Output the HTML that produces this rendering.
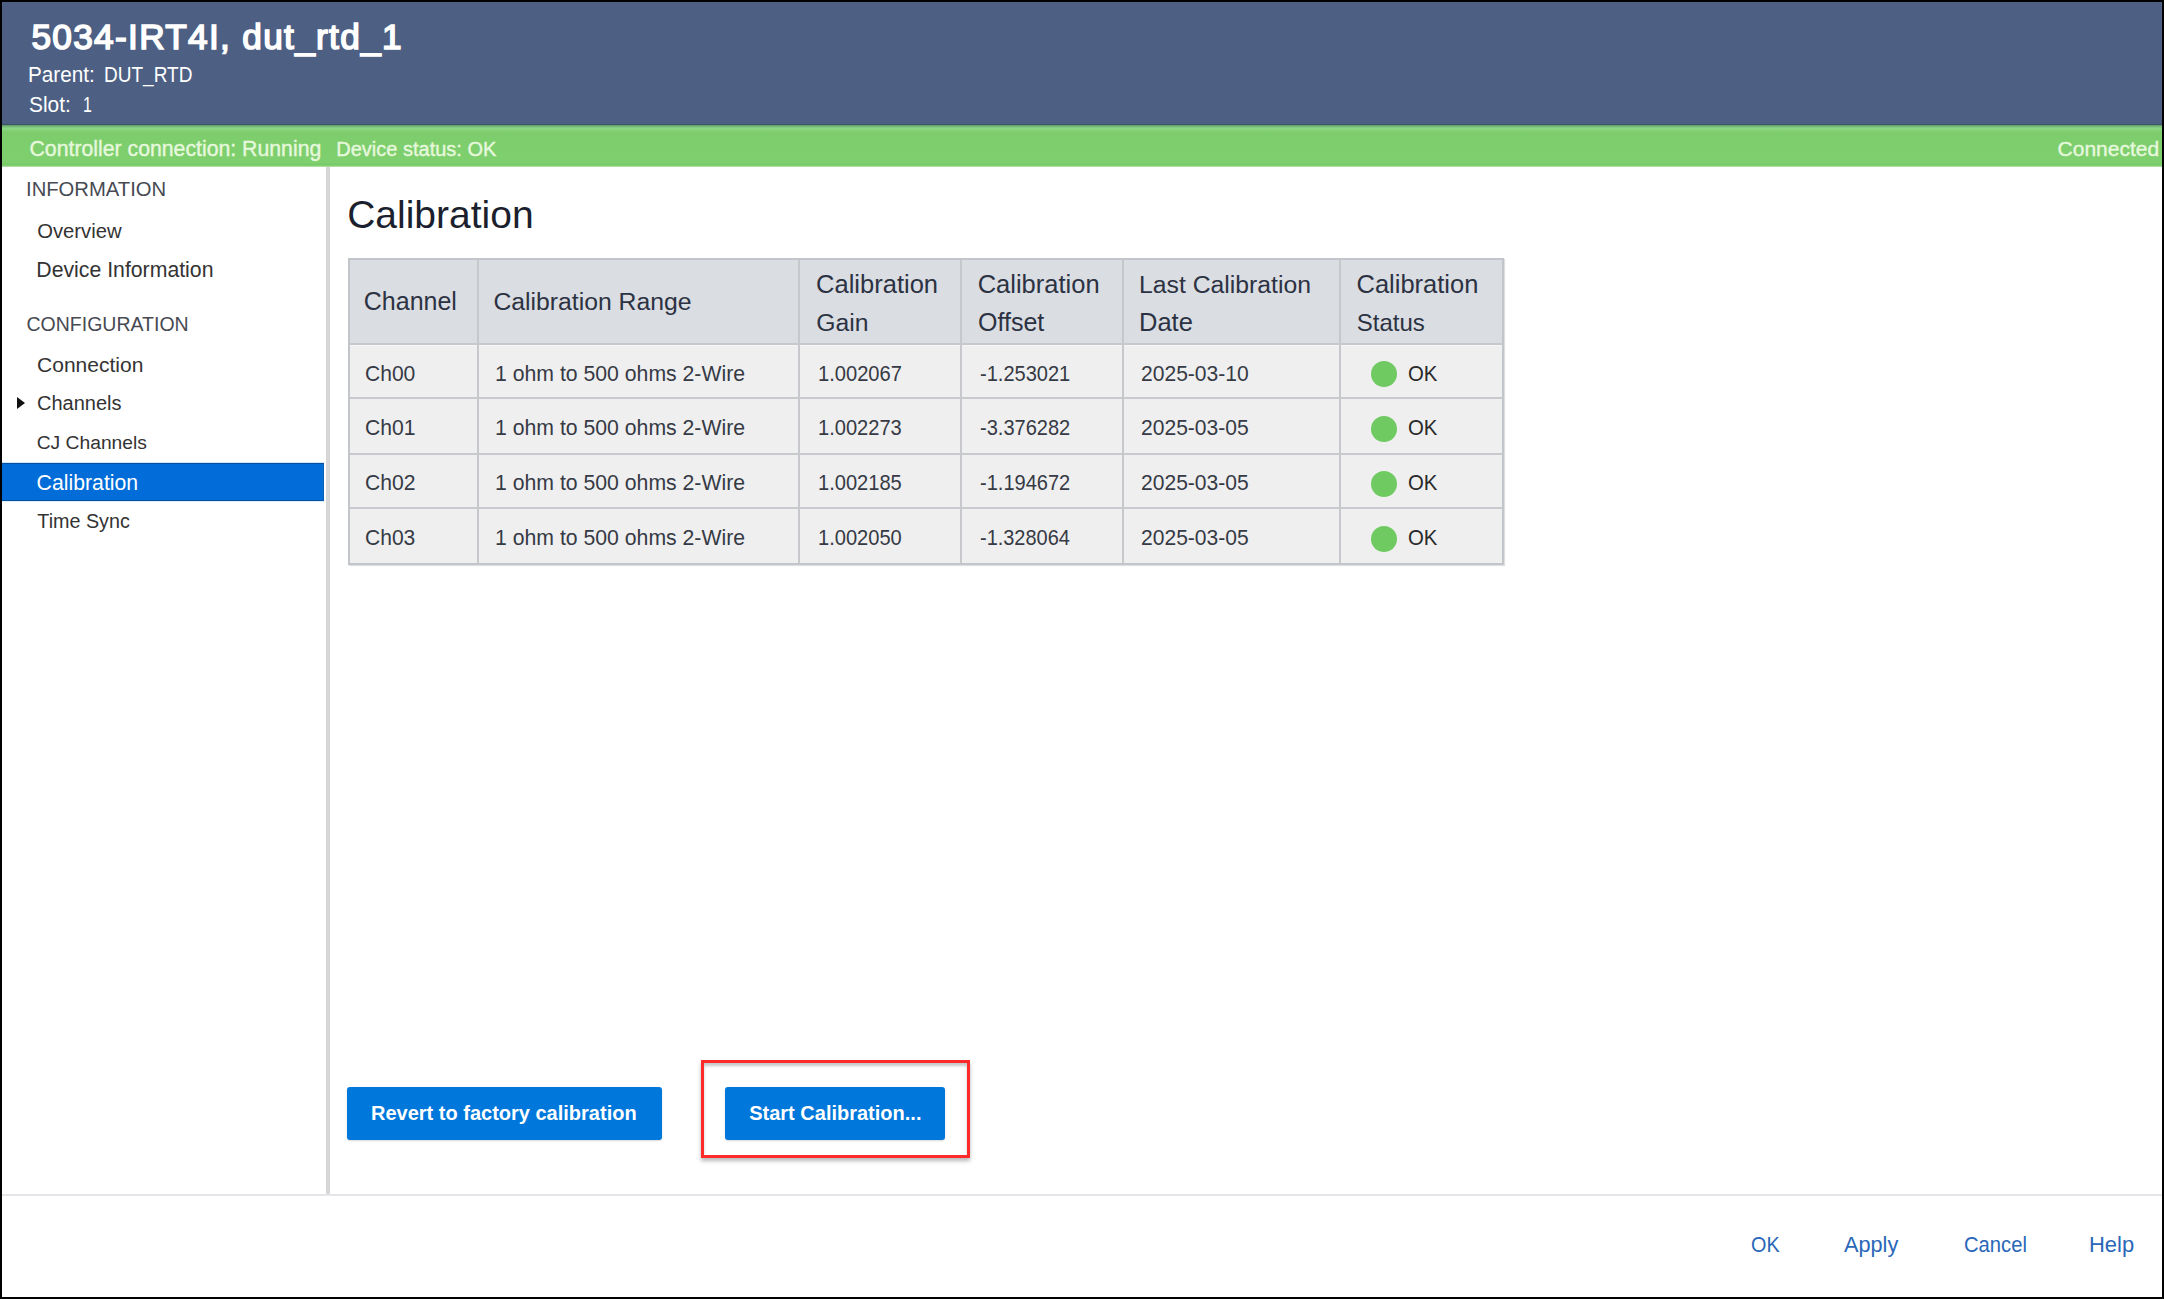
<!DOCTYPE html>
<html><head><meta charset="utf-8">
<style>
html,body{margin:0;padding:0;}
body{width:2164px;height:1299px;background:#000;position:relative;overflow:hidden;font-family:"Liberation Sans",sans-serif;}
.a{position:absolute;}
.t{position:absolute;white-space:pre;font-family:"Liberation Sans",sans-serif;}
</style></head><body>
<div class="a" style="left:2px;top:2px;width:2160px;height:1295px;background:#fff"></div>
<!-- header -->
<div class="a" style="left:2px;top:2px;width:2160px;height:122px;background:#4d5f83"></div>
<div class="a" style="left:2px;top:124px;width:2160px;height:1px;background:#3a5263"></div>
<!-- green bar -->
<div class="a" style="left:2px;top:125px;width:2160px;height:42px;background:linear-gradient(#5f9a6a 0px,#8ad582 3px,#8bd683 4px,#7dcd6d 7px,#7ecf6e 38px,#74c864 40px,#b8e6b0 42px)"></div>
<!-- sidebar -->
<div class="a" style="left:2px;top:463px;width:322px;height:38px;background:#026dd9;box-sizing:border-box;border-top:1px solid #0a4f9e;border-bottom:1px solid #0a4f9e;border-right:1px solid #0d5fb5;box-shadow:0 -1px 0 #cde9ff, 0 1px 0 #d9f0ff"></div>
<svg class="a" style="left:16px;top:396px" width="10" height="14" viewBox="0 0 10 14"><path d="M1 1 L9 7 L1 13 Z" fill="#111"/></svg>
<div class="a" style="left:326px;top:167px;width:4px;height:1027px;background:#d7d6d9"></div>
<!-- bottom divider -->
<div class="a" style="left:2px;top:1194px;width:2160px;height:2px;background:#e6e6ea"></div>
<!-- table -->
<div class="a" style="left:348px;top:258px;width:1156px;height:307px;background:#efeff0;box-sizing:border-box;border:2px solid #c2c5c9;box-shadow:1px 1px 1px rgba(0,0,0,0.12)"></div>
<div class="a" style="left:350px;top:260px;width:1152px;height:83px;background:#dadde2"></div>
<div class="a" style="left:350px;top:343px;width:1152px;height:2px;background:#c6c8cb"></div>
<div class="a" style="left:350px;top:345px;width:1152px;height:1px;background:#f6f6f8"></div>
<div class="a" style="left:350px;top:397px;width:1152px;height:2px;background:#c9cacd"></div>
<div class="a" style="left:350px;top:453px;width:1152px;height:2px;background:#c9cacd"></div>
<div class="a" style="left:350px;top:507px;width:1152px;height:2px;background:#c9cacd"></div>
<div class="a" style="left:477px;top:260px;width:2px;height:303px;background:#c6c8cb"></div>
<div class="a" style="left:798px;top:260px;width:2px;height:303px;background:#c6c8cb"></div>
<div class="a" style="left:960px;top:260px;width:2px;height:303px;background:#c6c8cb"></div>
<div class="a" style="left:1122px;top:260px;width:2px;height:303px;background:#c6c8cb"></div>
<div class="a" style="left:1339px;top:260px;width:2px;height:303px;background:#c6c8cb"></div>
<!-- dots -->
<div class="a" style="left:1371px;top:361px;width:26px;height:26px;border-radius:50%;background:#6fca62"></div>
<div class="a" style="left:1371px;top:416px;width:26px;height:26px;border-radius:50%;background:#6fca62"></div>
<div class="a" style="left:1371px;top:471px;width:26px;height:26px;border-radius:50%;background:#6fca62"></div>
<div class="a" style="left:1371px;top:526px;width:26px;height:26px;border-radius:50%;background:#6fca62"></div>
<!-- buttons -->
<div class="a" style="left:347px;top:1087px;width:315px;height:53px;border-radius:3px;background:#0077da;box-shadow:0 1px 2px rgba(0,0,0,0.15)"></div>
<div class="a" style="left:725px;top:1087px;width:220px;height:53px;border-radius:3px;background:#0077da;box-shadow:0 1px 2px rgba(0,0,0,0.15)"></div>
<div class="a" style="left:701px;top:1060px;width:269px;height:98px;box-sizing:border-box;border:3px solid #ff2a2a;box-shadow:0 3px 4px rgba(0,0,0,0.28), inset 0 3px 3px rgba(0,0,0,0.22)"></div>
<div class="t" style="left:31.4px;top:17px;font-size:35.25px;line-height:39px;color:#ffffff;letter-spacing:1.3px;-webkit-text-stroke:1.6px #ffffff">5034-IRT4I, dut_rtd_1</div>
<div class="t" style="left:28.3px;top:62px;font-size:21.75px;line-height:25px;color:#ffffff;transform:scaleX(0.9507);transform-origin:0 0">Parent:</div>
<div class="t" style="left:103.8px;top:62px;font-size:21.75px;line-height:25px;color:#ffffff;transform:scaleX(0.8746);transform-origin:0 0">DUT_RTD</div>
<div class="t" style="left:29.2px;top:92px;font-size:21.75px;line-height:25px;color:#ffffff;transform:scaleX(0.9597);transform-origin:0 0">Slot:</div>
<div class="t" style="left:82.9px;top:92px;font-size:21.75px;line-height:25px;color:#ffffff;transform:scaleX(0.7315);transform-origin:0 0">1</div>
<div class="t" style="left:29.5px;top:137px;font-size:21.25px;line-height:24px;color:#e6f8dc;-webkit-text-stroke:0.4px #e6f8dc">Controller connection: Running</div>
<div class="t" style="left:336.3px;top:138px;font-size:20.0px;line-height:22px;color:#e6f8dc;-webkit-text-stroke:0.4px #e6f8dc">Device status: OK</div>
<div class="t" style="left:2057.6px;top:137px;font-size:21.0px;line-height:23px;color:#e6f8dc;-webkit-text-stroke:0.4px #e6f8dc">Connected</div>
<div class="t" style="left:26.0px;top:178px;font-size:20.25px;line-height:22px;color:#474a52">INFORMATION</div>
<div class="t" style="left:37.2px;top:220px;font-size:20.25px;line-height:22px;color:#333333">Overview</div>
<div class="t" style="left:36.3px;top:258px;font-size:21.25px;line-height:24px;color:#333333">Device Information</div>
<div class="t" style="left:26.5px;top:313px;font-size:19.5px;line-height:22px;color:#474a52">CONFIGURATION</div>
<div class="t" style="left:37.1px;top:353px;font-size:21.0px;line-height:23px;color:#333333">Connection</div>
<div class="t" style="left:37.0px;top:392px;font-size:20.0px;line-height:22px;color:#333333">Channels</div>
<div class="t" style="left:36.7px;top:432px;font-size:19.25px;line-height:21px;color:#333333">CJ Channels</div>
<div class="t" style="left:36.6px;top:471px;font-size:21.25px;line-height:24px;color:#ffffff">Calibration</div>
<div class="t" style="left:37.3px;top:510px;font-size:19.75px;line-height:22px;color:#333333">Time Sync</div>
<div class="t" style="left:347.2px;top:193px;font-size:39.0px;line-height:43px;color:#1b1f2e">Calibration</div>
<div class="t" style="left:363.8px;top:287px;font-size:25.0px;line-height:28px;color:#2c3242">Channel</div>
<div class="t" style="left:493.4px;top:288px;font-size:24.75px;line-height:27px;color:#2c3242">Calibration Range</div>
<div class="t" style="left:816.1px;top:270px;font-size:25.5px;line-height:28px;color:#2c3242">Calibration</div>
<div class="t" style="left:816.2px;top:309px;font-size:24.75px;line-height:27px;color:#2c3242">Gain</div>
<div class="t" style="left:977.7px;top:270px;font-size:25.5px;line-height:28px;color:#2c3242">Calibration</div>
<div class="t" style="left:978.0px;top:308px;font-size:25.0px;line-height:28px;color:#2c3242">Offset</div>
<div class="t" style="left:1139.0px;top:271px;font-size:24.75px;line-height:27px;color:#2c3242">Last Calibration</div>
<div class="t" style="left:1139.0px;top:308px;font-size:25.5px;line-height:28px;color:#2c3242">Date</div>
<div class="t" style="left:1356.5px;top:270px;font-size:25.5px;line-height:28px;color:#2c3242">Calibration</div>
<div class="t" style="left:1356.8px;top:309px;font-size:24.0px;line-height:27px;color:#2c3242">Status</div>
<div class="t" style="left:365.4px;top:361px;font-size:22.5px;line-height:25px;color:#363a44;transform:scaleX(0.9354);transform-origin:0 0">Ch00</div>
<div class="t" style="left:495.2px;top:361px;font-size:22.5px;line-height:25px;color:#363a44;transform:scaleX(0.9432);transform-origin:0 0">1 ohm to 500 ohms 2-Wire</div>
<div class="t" style="left:817.6px;top:361px;font-size:22.5px;line-height:25px;color:#363a44;transform:scaleX(0.8944);transform-origin:0 0">1.002067</div>
<div class="t" style="left:980.2px;top:361px;font-size:22.5px;line-height:25px;color:#363a44;transform:scaleX(0.8903);transform-origin:0 0">-1.253021</div>
<div class="t" style="left:1140.7px;top:361px;font-size:22.5px;line-height:25px;color:#363a44;transform:scaleX(0.9359);transform-origin:0 0">2025-03-10</div>
<div class="t" style="left:1408.1px;top:361px;font-size:22.5px;line-height:25px;color:#2a2a2a;transform:scaleX(0.9062);transform-origin:0 0">OK</div>
<div class="t" style="left:365.4px;top:415px;font-size:22.5px;line-height:25px;color:#363a44;transform:scaleX(0.9395);transform-origin:0 0">Ch01</div>
<div class="t" style="left:495.2px;top:415px;font-size:22.5px;line-height:25px;color:#363a44;transform:scaleX(0.9432);transform-origin:0 0">1 ohm to 500 ohms 2-Wire</div>
<div class="t" style="left:817.6px;top:415px;font-size:22.5px;line-height:25px;color:#363a44;transform:scaleX(0.8922);transform-origin:0 0">1.002273</div>
<div class="t" style="left:980.2px;top:415px;font-size:22.5px;line-height:25px;color:#363a44;transform:scaleX(0.8903);transform-origin:0 0">-3.376282</div>
<div class="t" style="left:1140.7px;top:415px;font-size:22.5px;line-height:25px;color:#363a44;transform:scaleX(0.9359);transform-origin:0 0">2025-03-05</div>
<div class="t" style="left:1408.1px;top:415px;font-size:22.5px;line-height:25px;color:#2a2a2a;transform:scaleX(0.9062);transform-origin:0 0">OK</div>
<div class="t" style="left:365.4px;top:470px;font-size:22.5px;line-height:25px;color:#363a44;transform:scaleX(0.9395);transform-origin:0 0">Ch02</div>
<div class="t" style="left:495.2px;top:470px;font-size:22.5px;line-height:25px;color:#363a44;transform:scaleX(0.9432);transform-origin:0 0">1 ohm to 500 ohms 2-Wire</div>
<div class="t" style="left:817.6px;top:470px;font-size:22.5px;line-height:25px;color:#363a44;transform:scaleX(0.8922);transform-origin:0 0">1.002185</div>
<div class="t" style="left:980.2px;top:470px;font-size:22.5px;line-height:25px;color:#363a44;transform:scaleX(0.8903);transform-origin:0 0">-1.194672</div>
<div class="t" style="left:1140.7px;top:470px;font-size:22.5px;line-height:25px;color:#363a44;transform:scaleX(0.9359);transform-origin:0 0">2025-03-05</div>
<div class="t" style="left:1408.1px;top:470px;font-size:22.5px;line-height:25px;color:#2a2a2a;transform:scaleX(0.9062);transform-origin:0 0">OK</div>
<div class="t" style="left:365.4px;top:525px;font-size:22.5px;line-height:25px;color:#363a44;transform:scaleX(0.9354);transform-origin:0 0">Ch03</div>
<div class="t" style="left:495.2px;top:525px;font-size:22.5px;line-height:25px;color:#363a44;transform:scaleX(0.9432);transform-origin:0 0">1 ohm to 500 ohms 2-Wire</div>
<div class="t" style="left:817.6px;top:525px;font-size:22.5px;line-height:25px;color:#363a44;transform:scaleX(0.8922);transform-origin:0 0">1.002050</div>
<div class="t" style="left:980.2px;top:525px;font-size:22.5px;line-height:25px;color:#363a44;transform:scaleX(0.8863);transform-origin:0 0">-1.328064</div>
<div class="t" style="left:1140.7px;top:525px;font-size:22.5px;line-height:25px;color:#363a44;transform:scaleX(0.9359);transform-origin:0 0">2025-03-05</div>
<div class="t" style="left:1408.1px;top:525px;font-size:22.5px;line-height:25px;color:#2a2a2a;transform:scaleX(0.9062);transform-origin:0 0">OK</div>
<div class="t" style="left:371.0px;top:1102px;font-size:20.0px;line-height:22px;color:#ffffff;font-weight:bold">Revert to factory calibration</div>
<div class="t" style="left:749.2px;top:1102px;font-size:20.0px;line-height:22px;color:#ffffff;font-weight:bold">Start Calibration...</div>
<div class="t" style="left:1750.7px;top:1232px;font-size:21.75px;line-height:25px;color:#2a67b8;transform:scaleX(0.9111);transform-origin:0 0">OK</div>
<div class="t" style="left:1843.7px;top:1232px;font-size:21.75px;line-height:25px;color:#2a67b8;transform:scaleX(0.9980);transform-origin:0 0">Apply</div>
<div class="t" style="left:1963.8px;top:1232px;font-size:21.75px;line-height:25px;color:#2a67b8;transform:scaleX(0.9285);transform-origin:0 0">Cancel</div>
<div class="t" style="left:2089.2px;top:1232px;font-size:21.75px;line-height:25px;color:#2a67b8;transform:scaleX(1.0093);transform-origin:0 0">Help</div>
</body></html>
